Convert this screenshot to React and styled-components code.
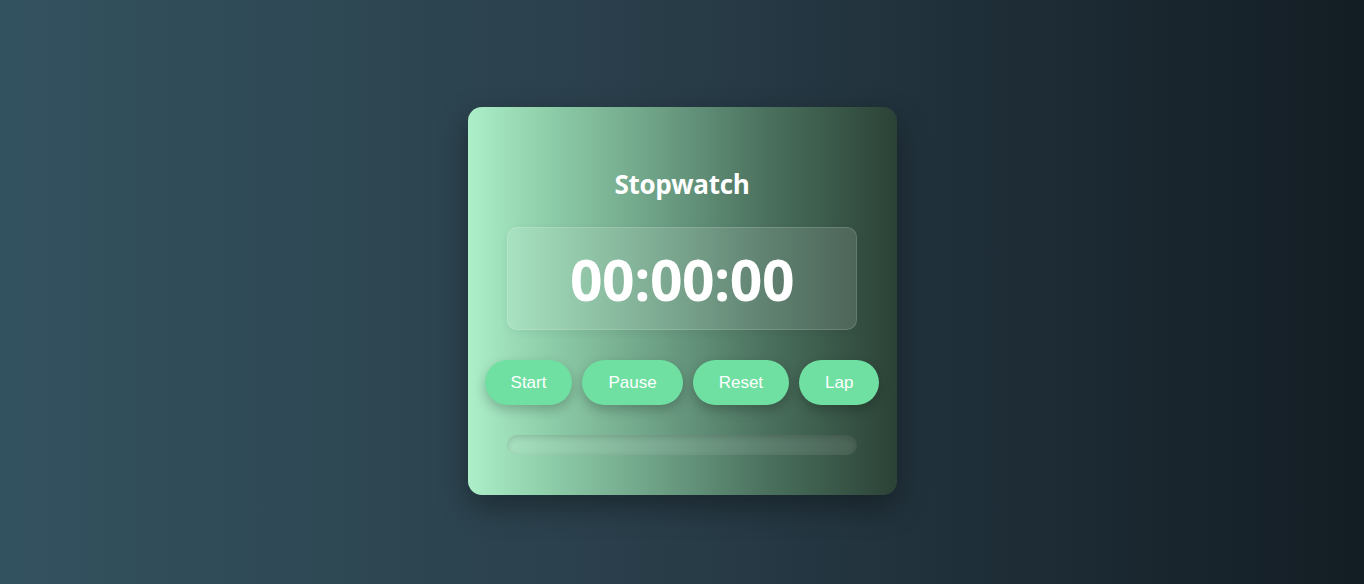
import React from "react";
import styled, { createGlobalStyle } from "styled-components";

const GlobalStyle = createGlobalStyle`
  * { box-sizing: border-box; }
  html, body { margin: 0; padding: 0; }
  body {
    font-family: "Open Sans", "Liberation Sans", sans-serif;
    background: linear-gradient(to right, #33525f, #2a3f4b 45%, #131d24);
  }
`;

const Page = styled.div`
  min-height: 584px;
  display: flex;
  justify-content: center;
  align-items: flex-start;
  padding-top: 107px;
`;

const Card = styled.div`
  width: 429px;
  height: 388px;
  padding: 61px 40px 40px;
  border-radius: 14px;
  background: linear-gradient(to right, #acefc9, #8fcfaa 18%, #6c9f84 45%, #4a705d 70%, #2b4236);
  box-shadow: 0 12px 30px rgba(0, 0, 0, 0.35);
  display: flex;
  flex-direction: column;
  align-items: center;
`;

const Title = styled.h2`
  margin: 0 0 26px;
  font-size: 26px;
  line-height: 33px;
  font-weight: 700;
  color: #ffffff;
  letter-spacing: -0.3px;
`;

const Display = styled.div`
  width: 350px;
  height: 103px;
  border-radius: 10px;
  background: rgba(255, 255, 255, 0.12);
  border: 1px solid rgba(255, 255, 255, 0.14);
  box-shadow: 0 2px 8px rgba(0, 0, 0, 0.06);
  display: flex;
  align-items: center;
  justify-content: center;
  font-size: 57px;
  font-weight: 700;
  color: #ffffff;
  letter-spacing: -0.5px;
`;

const Controls = styled.div`
  margin-top: 30px;
  display: flex;
  gap: 10px;
`;

const Button = styled.button`
  height: 45px;
  padding: 0 26px;
  border: none;
  border-radius: 25px;
  background: #6fe0a2;
  color: #ffffff;
  font-family: "Liberation Sans", Arial, sans-serif;
  font-size: 17px;
  box-shadow: 0 5px 12px rgba(0, 0, 0, 0.22);
  cursor: pointer;
`;

const Progress = styled.div`
  margin-top: 30px;
  width: 350px;
  height: 20px;
  border-radius: 10px;
  background: rgba(255, 255, 255, 0.1);
  box-shadow: inset 0 2px 6px rgba(0, 0, 0, 0.15);
`;

export default function App() {
  return (
    <>
      <GlobalStyle />
      <Page>
        <Card>
          <Title>Stopwatch</Title>
          <Display>00:00:00</Display>
          <Controls>
            <Button>Start</Button>
            <Button>Pause</Button>
            <Button>Reset</Button>
            <Button>Lap</Button>
          </Controls>
          <Progress />
        </Card>
      </Page>
    </>
  );
}
